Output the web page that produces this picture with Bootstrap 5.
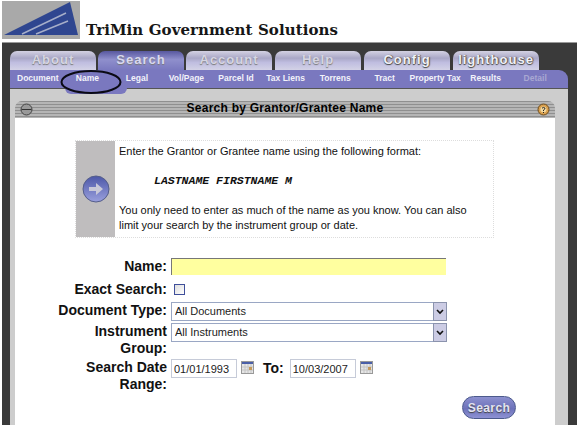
<!DOCTYPE html>
<html>
<head>
    <title>Search by Grantor/Grantee Name</title>
    <link href="https://cdn.jsdelivr.net/npm/bootstrap@5.3.0/dist/css/bootstrap.min.css" rel="stylesheet">
    <style>
        html, body { height: 425px; overflow: hidden; background: #fff; }
        body { font-family: "Liberation Sans", Arial, sans-serif; color: #111; }
        .top-bar { height: 42px; padding: 1px 0 0 2px; }
        .brand-name { font-family: "DejaVu Serif", "Liberation Serif", serif; font-weight: 600; font-size: 15px; letter-spacing: .08px; margin: 20px 0 0 6px; color: #161616; line-height: 18px; }
        .app-frame { height: 383px; margin-left: 2px; background: #3a3a3a; border-top: 1px solid #999; padding-top: 8px; position: relative; }
        .tab-row { height: 19px; padding-left: 8px; gap: 2px; }
        .tab-item { width: 86px; border-radius: 7px 7px 0 0; background: linear-gradient(#d3d1e2, #a9a7c6 38%, #bfbde0 60%, #d3d2e6); color: #d6d5e2; font-weight: 700; font-size: 13px; letter-spacing: 1px; text-align: center; line-height: 17px; text-shadow: 0 1px 1px #777; }
        .tab-item.tab-on { background: linear-gradient(#58589f, #8f8fcc 45%, #7a79bf); color: #d8d8ee; }
        .tab-item.tab-strong { color: #f0f0f6; font-size: 13px; text-shadow: 0 1px 1px #444, 1px 0 1px #555; }
        .tab-gap { margin-left: 1px; }
        .sub-nav { height: 18px; margin: 0 9px 0 8px; padding: 0 8px 0 3px; background: #7a78bf; border-radius: 0 9px 0 0; }
        .sub-item { flex: 1 1 0; text-align: center; color: #f2f2fa; font-weight: 700; font-size: 8.5px; line-height: 17px; white-space: nowrap; }
        .sub-item.sub-off { color: #a9a8d2; }
        .sub-bump { position: absolute; left: 63px; top: 45px; width: 62px; height: 6px; background: #7a78bf; border-radius: 0 0 8px 8px; z-index: 2; }
        .name-ring { position: absolute; left: 58px; top: 26px; z-index: 3; }
        .panel-gray { height: 337px; margin-left: 8px; margin-right: 9px; background: #cdcdcd; padding: 12px 13px 0 5px; border-top: 1px solid #555; }
        .panel-head { height: 17px; border-radius: 7px 7px 0 0; background: repeating-linear-gradient(#8f8f8f 0, #8f8f8f 1px, #b5b5b5 1px, #b5b5b5 3px); padding: 0 5px; font-weight: 700; font-size: 12px; letter-spacing: .25px; line-height: 15px; color: #000; }
        .panel-head .head-title { flex: 1; text-align: center; padding-bottom: 2px; }
        .panel-body-white { height: 320px; background: #fff; padding-top: 22px; }
        .help-box { width: 419px; height: 98px; margin-left: 60px; border: 1px dotted #ddd; font-size: 11px; line-height: 13.5px; }
        .help-side { width: 39px; flex-shrink: 0; background: #bfbdbe; }
        .help-text { padding: 4px 5px 0 4px; }
        .help-text p { margin: 0; }
        .help-text p:last-child { line-height: 15px; }
        .help-sample { font-family: "Liberation Mono", monospace; font-weight: 700; font-style: italic; font-size: 11.5px; padding: 15px 0 16px 35px; }
        .search-form { padding-top: 20px; margin-left: 0; }
        .form-line { display: flex; align-items: flex-start; }
        .form-label-cell { width: 152px; text-align: right; font-weight: 700; font-size: 14px; line-height: 16.5px; color: #111; }
        .form-field-cell { margin-left: 4px; }
        .line-name { height: 23px; }
        .line-exact { height: 21px; }
        .line-doc { height: 21px; }
        .line-group { height: 36px; }
        .field-name { width: 275px; height: 17px; background: #ffff9f; border: 0; border-top: 1px solid #777; border-left: 1px solid #777; border-radius: 0; padding: 0; }
        .field-check { width: 11px; height: 11px; border: 1px solid #3f4f9a; background: linear-gradient(135deg, #ddd, #fff); margin: 3px 0 0 3px; }
        .field-select { width: 276px; height: 19px; position: relative; }
        .field-select select { width: 100%; height: 19px; padding: 0 0 0 3px; font-size: 11px; line-height: 17px; border: 1px solid #9aa7c4; border-radius: 0; background-image: none; color: #222; font-family: "Liberation Sans", Arial, sans-serif; }
        .select-arrow { position: absolute; right: 0; top: 0; width: 14px; height: 19px; }
        .field-date { width: 66px; height: 19px; padding: 0 0 0 2px; font-size: 11px; border: 1px solid #c6cbd8; border-radius: 0; color: #222; font-family: "Liberation Sans", Arial, sans-serif; }
        .date-to { font-weight: 700; font-size: 14px; margin: 1px 6px 0 9px; line-height: 17px; }
        .date-icon { margin: 2px 0 0 4px; }
        .btn-search { position: absolute; left: 460px; top: 353px; width: 54px; height: 23px; padding: 0; border-radius: 12px; border: 1px solid #4c5a8c; background: linear-gradient(#8c90cf, #6d72ba 55%, #8e92d4); color: #e4e4f2; font-size: 12px; font-weight: 700; letter-spacing: .4px; line-height: 20px; text-shadow: 0 1px 1px #444; }
    </style>
</head>
<body>
    <div class="top-bar d-flex">
        <svg width="78" height="38" viewBox="0 0 78 38">
            <rect width="78" height="38" fill="#a9a9a9"/>
            <polygon points="2,34 68,1 76,34" fill="#2f4690"/>
            <path d="M20 33 L64 12 M34 33 L66 20" stroke="#a6aec9" stroke-width="1.5" fill="none"/>
        </svg>
        <div class="brand-name">TriMin Government Solutions</div>
    </div>

    <div class="app-frame">
        <div class="tab-row d-flex">
            <div class="tab-item">About</div>
            <div class="tab-item tab-on">Search</div>
            <div class="tab-item">Account</div>
            <div class="tab-item tab-gap">Help</div>
            <div class="tab-item tab-strong tab-gap">Config</div>
            <div class="tab-item tab-strong tab-gap">lighthouse</div>
        </div>
        <div class="sub-nav d-flex">
            <div class="sub-item">Document</div>
            <div class="sub-item">Name</div>
            <div class="sub-item">Legal</div>
            <div class="sub-item">Vol/Page</div>
            <div class="sub-item">Parcel Id</div>
            <div class="sub-item">Tax Liens</div>
            <div class="sub-item">Torrens</div>
            <div class="sub-item">Tract</div>
            <div class="sub-item">Property Tax</div>
            <div class="sub-item">Results</div>
            <div class="sub-item sub-off">Detail</div>
        </div>
        <div class="sub-bump"></div>
        <svg class="name-ring" width="64" height="26" viewBox="0 0 64 26">
            <ellipse cx="31" cy="13" rx="29.5" ry="11" fill="none" stroke="#0a0a14" stroke-width="2"/>
        </svg>

        <div class="panel-gray">
            <div class="panel-head d-flex align-items-center">
                <svg width="13" height="13" viewBox="0 0 13 13"><circle cx="6.5" cy="6.5" r="5.5" fill="#999" stroke="#444"/><path d="M1.5 6.5H11.5" stroke="#333"/></svg>
                <div class="head-title">Search by Grantor/Grantee Name</div>
                <svg width="13" height="13" viewBox="0 0 13 13"><circle cx="6.5" cy="6.5" r="5.5" fill="#d9a04e" stroke="#6b4a1c"/><circle cx="6.5" cy="6.5" r="3" fill="#f2d9a0"/><path d="M5 5.2Q6.5 3.6 8 5.2Q8 6.3 6.5 7V8M6.5 9V10" stroke="#222" fill="none"/></svg>
            </div>
            <div class="panel-body-white">
                <div class="help-box d-flex">
                    <div class="help-side d-flex align-items-center justify-content-center">
                        <svg width="28" height="28" viewBox="0 0 28 28">
                            <defs><linearGradient id="arrowBall" x1="0" y1="0" x2="0" y2="1"><stop offset="0" stop-color="#4c57a8"/><stop offset="1" stop-color="#9aa0dd"/></linearGradient></defs>
                            <circle cx="14" cy="14" r="13" fill="url(#arrowBall)" stroke="#555e8a"/>
                            <path d="M7 12H14V8L21 14L14 20V16H7Z" fill="#c8c8d8"/>
                        </svg>
                    </div>
                    <div class="help-text flex-grow-1">
                        <p>Enter the Grantor or Grantee name using the following format:</p>
                        <p class="help-sample">LASTNAME FIRSTNAME M</p>
                        <p>You only need to enter as much of the name as you know. You can also limit your search by the instrument group or date.</p>
                    </div>
                </div>

                <form class="search-form">
                    <div class="form-line line-name">
                        <div class="form-label-cell">Name:</div>
                        <div class="form-field-cell"><input type="text" class="form-control field-name"></div>
                    </div>
                    <div class="form-line line-exact">
                        <div class="form-label-cell">Exact Search:</div>
                        <div class="form-field-cell"><div class="field-check"></div></div>
                    </div>
                    <div class="form-line line-doc">
                        <div class="form-label-cell">Document Type:</div>
                        <div class="form-field-cell field-select">
                            <select class="form-select"><option>All Documents</option></select>
                            <svg class="select-arrow" viewBox="0 0 14 19"><rect x=".5" y=".5" width="13" height="18" fill="#ccccE4" stroke="#8b93ad"/><path d="M4 8L7 11L10 8" stroke="#111" stroke-width="1.6" fill="none"/></svg>
                        </div>
                    </div>
                    <div class="form-line line-group">
                        <div class="form-label-cell">Instrument<br>Group:</div>
                        <div class="form-field-cell field-select">
                            <select class="form-select"><option>All Instruments</option></select>
                            <svg class="select-arrow" viewBox="0 0 14 19"><rect x=".5" y=".5" width="13" height="18" fill="#ccccE4" stroke="#8b93ad"/><path d="M4 8L7 11L10 8" stroke="#111" stroke-width="1.6" fill="none"/></svg>
                        </div>
                    </div>
                    <div class="form-line">
                        <div class="form-label-cell">Search Date<br>Range:</div>
                        <div class="form-field-cell d-flex align-items-start">
                            <input type="text" class="form-control field-date" value="01/01/1993">
                            <svg class="date-icon" width="13" height="13" viewBox="0 0 13 13"><rect x=".5" y=".5" width="12" height="12" fill="#e6e6e6" stroke="#999"/><rect x="1" y="1" width="11" height="2" fill="#4a5fa8"/><path d="M1 6H12M1 9H12M4 3V12M7 3V12M10 3V12" stroke="#c4c4c4"/><rect x="8" y="6" width="3" height="3" fill="#c59a5a"/></svg>
                            <div class="date-to">To:</div>
                            <input type="text" class="form-control field-date" value="10/03/2007">
                            <svg class="date-icon" width="13" height="13" viewBox="0 0 13 13"><rect x=".5" y=".5" width="12" height="12" fill="#e6e6e6" stroke="#999"/><rect x="1" y="1" width="11" height="2" fill="#4a5fa8"/><path d="M1 6H12M1 9H12M4 3V12M7 3V12M10 3V12" stroke="#c4c4c4"/><rect x="8" y="6" width="3" height="3" fill="#c59a5a"/></svg>
                        </div>
                    </div>
                </form>
            </div>
        </div>
        <button type="button" class="btn btn-search">Search</button>
    </div>
    <script src="https://cdn.jsdelivr.net/npm/bootstrap@5.3.0/dist/js/bootstrap.bundle.min.js"></script>
</body>
</html>
